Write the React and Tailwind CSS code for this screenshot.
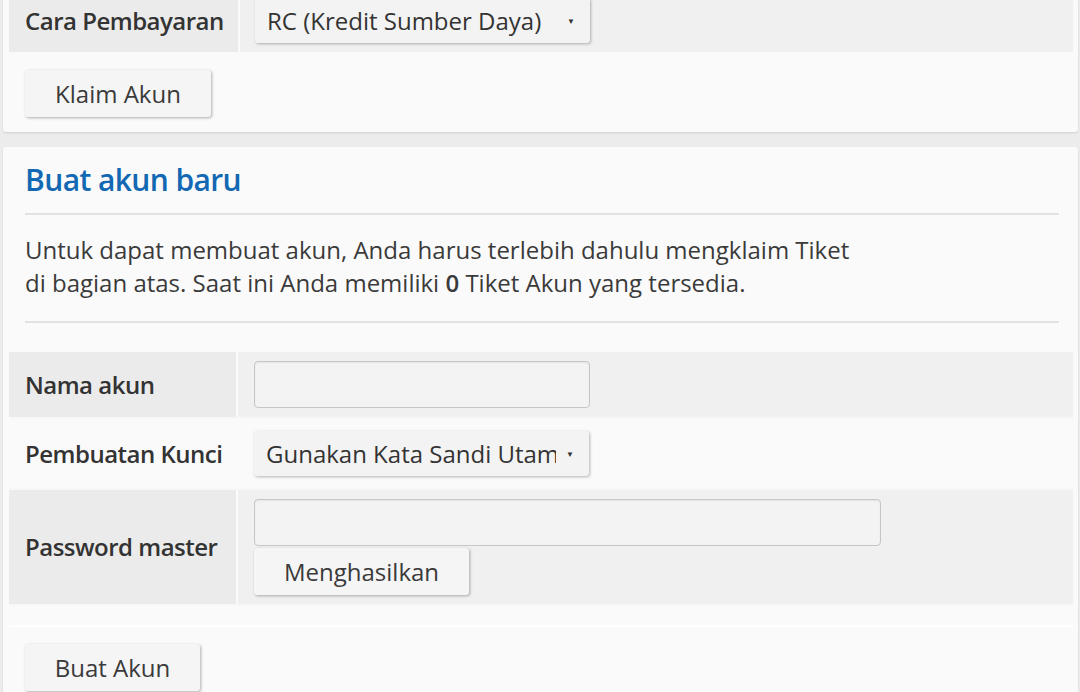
import React from "react";

const font = { fontFamily: '"Open Sans", "Noto Sans", sans-serif' };

function Select({ label, width = "w-[335px]" }) {
  return (
    <div className={`${width} h-[45px] flex items-center bg-[#f3f3f3] rounded-[3px] shadow-[1px_1px_3px_rgba(0,0,0,0.28)] pl-[12px] pr-[15px]`}>
      <span className="flex-1 overflow-hidden whitespace-nowrap text-[24px] text-[#333]">{label}</span>
      <span className="ml-[10px] text-[8px] text-[#333] leading-none">▼</span>
    </div>
  );
}

function Button({ children, width }) {
  return (
    <button className={`${width} h-[47px] bg-[#f5f5f5] rounded-[3px] shadow-[1px_1px_3px_rgba(0,0,0,0.3)] text-[24px] text-[#3a3a3a]`}>
      {children}
    </button>
  );
}

function Input({ width }) {
  return (
    <div className={`${width} h-[47px] bg-[#f3f3f3] border border-[#c6c6c6] rounded-[4px] shadow-[inset_0_1px_2px_rgba(0,0,0,0.06)]`} />
  );
}

function Row({ label, shaded, height, children, alignTop }) {
  return (
    <div className={`flex ${height}`}>
      <div className={`w-[227px] flex items-center pl-[16px] text-[24px] font-semibold tracking-[-0.5px] text-[#333] ${shaded ? "bg-[#ebebeb]" : ""}`}>
        {label}
      </div>
      <div className={`flex-1 ml-[2px] pl-[16px] ${shaded ? "bg-[#f0f0f0]" : ""} ${alignTop ? "" : "flex items-center"}`}>
        {children}
      </div>
    </div>
  );
}

export default function App() {
  return (
    <div className="min-h-[692px] bg-[#ececec] pl-[3px] pr-[2px] overflow-hidden" style={font}>
      {/* Klaim card */}
      <div className="bg-[#fafafa] rounded-b-[3px] shadow-[0_1px_2px_rgba(0,0,0,0.12)] pb-[15px]">
        <div className="flex h-[52px] ml-[6px] mr-[5px]">
          <div className="w-[229px] bg-[#ebebeb] flex items-center pl-[16px] pb-[10px] text-[24px] font-semibold tracking-[-0.5px] text-[#333]">
            Cara Pembayaran
          </div>
          <div className="flex-1 ml-[2px] bg-[#f0f0f0] pl-[15px]">
            <div className="-mt-[2px]">
              <Select label="RC (Kredit Sumber Daya)" />
            </div>
          </div>
        </div>
        <div className="mt-[18px] ml-[22px]">
          <Button width="w-[186px]">Klaim Akun</Button>
        </div>
      </div>

      <div className="h-[15px]" />

      {/* Buat akun card */}
      <div className="bg-[#fafafa] rounded-t-[3px] shadow-[0_1px_2px_rgba(0,0,0,0.12)] pb-[10px]">
        <h2 className="pt-[14px] pl-[22px] text-[30px] leading-[38px] font-semibold tracking-[-0.6px] text-[#1268b3]">
          Buat akun baru
        </h2>
        <div className="mt-[14px] ml-[22px] mr-[19px] h-[2px] bg-[#e2e2e2]" />
        <p className="mt-[18px] ml-[22px] text-[24px] leading-[33px] text-[#3a3a3a]">
          Untuk dapat membuat akun, Anda harus terlebih dahulu mengklaim Tiket
          <br />
          di bagian atas. Saat ini Anda memiliki <b className="font-semibold">0</b> Tiket Akun yang tersedia.
        </p>
        <div className="mt-[22px] ml-[22px] mr-[19px] h-[2px] bg-[#e2e2e2]" />

        <div className="mt-[29px] ml-[6px] mr-[5px] flex flex-col">
          <Row label="Nama akun" shaded height="h-[65px]">
            <Input width="w-[336px]" />
          </Row>
          <div className="h-[2px] bg-[#f7f7f7]" />
          <Row label="Pembuatan Kunci" height="h-[69px]">
            <Select label="Gunakan Kata Sandi Utama" />
          </Row>
          <div className="h-[2px] bg-[#f7f7f7]" />
          <Row label="Password master" shaded height="h-[114px]" alignTop>
            <div className="pt-[9px] flex flex-col gap-[2px]">
              <Input width="w-[627px]" />
              <Button width="w-[215px]">Menghasilkan</Button>
            </div>
          </Row>
          <div className="h-[2px] bg-[#f7f7f7]" />
          <div className="h-[19px]" />
          <div className="h-[2px] bg-[#ffffff]" />
        </div>

        <div className="mt-[17px] ml-[22px]">
          <Button width="w-[175px]">Buat Akun</Button>
        </div>
      </div>
    </div>
  );
}
